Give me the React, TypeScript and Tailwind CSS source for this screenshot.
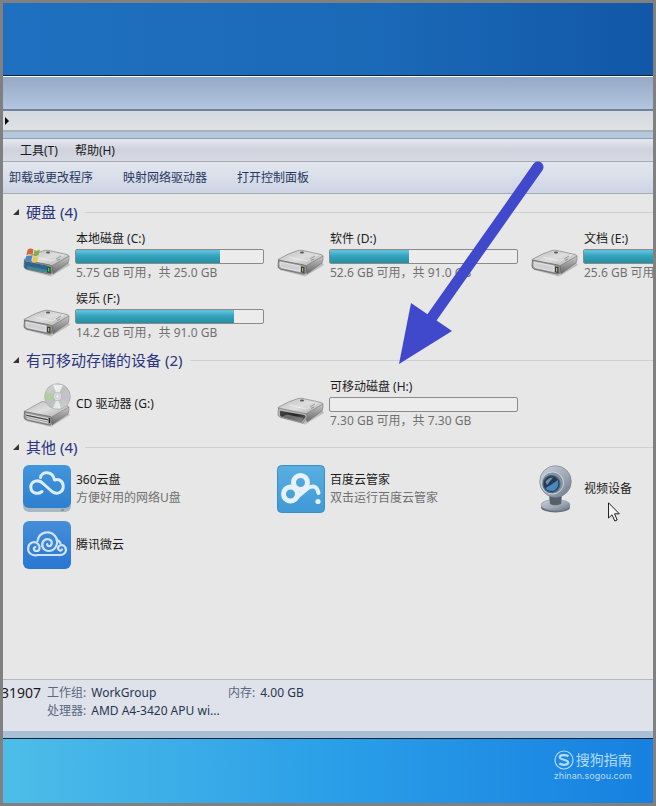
import React from "react";

interface Disk {
  name: string;
  icon: React.ReactNode;
  free?: string;
  total?: string;
}

interface App {
  name: string;
  icon: React.ReactNode;
  note?: string;
}

const DriveBody: React.FC<{ open?: boolean }> = ({ open }) => (
  <g>
    <path d="M3 38 L28 44.500 L47 33 L45 30 L4 35Z" fill="#000" opacity=".18" />
    <path d="M1 27.500 Q12 21 21 18.500 Q23 18 26 18.500 L44 22.500 Q47 23.500 45.500 25 L29 34.500 L2 29.500Z" fill="url(#driveTop)" stroke="#858585" strokeWidth=".7" />
    <path d="M28.500 34 L46 24 Q46.500 28 45 31 L30 42Z" fill="url(#driveSide)" stroke="#6c6c6c" strokeWidth=".5" />
    {open ? (
      <>
        <path d="M1.500 28 L28 33.500 Q31 34.500 30 37 L26 43 L3 37 Q1 36.500 1 34Z" fill="#b5b5b5" stroke="#6f6f6f" strokeWidth=".6" />
        <path d="M3 30.800 L27 35 Q29.500 35.800 28 38 L24.500 42 L4 36.500 Q3 36 3 34Z" fill="url(#slot)" />
        <path d="M5 36.500 L10 34.500 L26 38 L24.500 42Z" fill="#8c8c8c" opacity=".7" />
      </>
    ) : (
      <>
        <path d="M1.500 28 L27 33 Q29.500 33.500 29.500 36 L29 40 Q28.500 42.500 26 42 L3 37 Q1 36.500 1 34Z" fill="#9a9a9a" stroke="#5f5f5f" strokeWidth=".7" />
        <path d="M3 30 L23 34 L23 39.500 L4 35.500 Q3 35 3 33Z" fill="#cfcfd4" stroke="#efefef" strokeWidth=".8" />
        <path d="M24 34.500 L27.500 35 L27.500 41.200 L24 40.200Z" fill="#3d3d3d" />
        <path d="M25.700 36 V39.500" stroke="#b9dc7d" strokeWidth="1" />
      </>
    )}
    <path d="M12 25 L29 29 L41 22.500" fill="none" stroke="#fff" strokeWidth=".9" opacity=".5" />
    <path d="M33 27 L38 24 M34 28.500 L37 27" stroke="#777" strokeWidth=".7" />
    <ellipse cx="25" cy="20.500" rx="2" ry=".9" fill="#555" />
  </g>
);

const DriveIcon: React.FC = () => (
  <svg viewBox="0 0 48 48" className="size-12 shrink-0" aria-hidden="true">
    <DriveBody />
  </svg>
);

const SystemDriveIcon: React.FC = () => (
  <svg viewBox="0 0 48 48" className="size-12 shrink-0" aria-hidden="true">
    <DriveBody />
    <path d="M1.500 29 L24 33.500 L24 40.500 L3 36.500 Q1 36 1.500 33Z" fill="#33628c" />
    <path d="M4 34 L24 38 L24 40.500 L4 36.500Z" fill="#3a8a98" />
    <path d="M24 34.500 L27.500 35 L27.500 41.200 L24 40.200Z" fill="#155f35" />
    <path d="M25.700 36 V39.500" stroke="#6edb5a" strokeWidth="1" />
    <path d="M4.500 18 Q7 15.500 10.500 17.500 L9.500 23 Q6 21.500 3.300 23.500Z" fill="#d0683a" />
    <path d="M11.500 18 Q14 19.500 17 17.500 L15.500 23 Q13 25 10.500 23.500Z" fill="#86ac48" />
    <path d="M3 24.500 Q6 22.500 9.300 24.300 L8 29.500 Q5 28 1.800 29.500Z" fill="#4b85c4" />
    <path d="M10.300 24.600 Q13 26 15.500 24 L14 29.800 Q11.500 31.500 9 30Z" fill="#ecc94c" />
  </svg>
);

const RemovableDriveIcon: React.FC = () => (
  <svg viewBox="0 0 48 48" className="size-12 shrink-0" aria-hidden="true">
    <DriveBody open />
  </svg>
);

const CdDriveIcon: React.FC = () => (
  <svg viewBox="0 0 48 48" className="size-12 shrink-0" aria-hidden="true">
    <path d="M3 41 L28 47 L47 35 L45 33Z" fill="#000" opacity=".16" />
    <path d="M1 31.500 L19 21.500 L45 26 L45.500 27.500 L29 37.500 L2 33.500Z" fill="url(#driveTop)" stroke="#8b8b8b" strokeWidth=".7" />
    <path d="M28.500 37 L46 27 Q46.500 31 45 34 L29 45Z" fill="url(#driveSide)" stroke="#777" strokeWidth=".5" />
    <path d="M1.500 31.500 L27 36.500 Q29 37 29 39 L28.500 43 Q28.500 45.500 26 45 L3 40 Q1 39.500 1 37Z" fill="#9b9b9b" stroke="#555" strokeWidth=".6" />
    <path d="M3.500 34 L25 38.500 M3.500 36.500 L25 41 M4 38.500 L25 43" stroke="#eee" strokeWidth=".8" />
    <path d="M3.500 35.300 L25 39.800" stroke="#333" strokeWidth=".9" />
    <path d="M26.500 38 V43" stroke="#222" strokeWidth="1.300" />
    <circle cx="34.500" cy="16.500" r="12.800" fill="url(#disc)" stroke="#a2a2a2" strokeWidth=".7" />
    <path d="M34.500 16.500 L22.500 12 Q21 17 23.500 22Z" fill="#a9d28b" opacity=".7" />
    <path d="M34.500 16.500 L30 4.500 L40 5Z" fill="#fff" opacity=".7" />
    <path d="M34.500 16.500 L47 15 L45 23Z" fill="#c6b5d8" opacity=".5" />
    <path d="M34.500 16.500 L30 28.500 L38 28.500Z" fill="#fff" opacity=".6" />
    <circle cx="34.500" cy="16.500" r="4.200" fill="#d7dade" stroke="#b0b0b0" strokeWidth=".6" />
    <circle cx="34.500" cy="16.500" r="1.700" fill="#f3f3f3" stroke="#aaa" strokeWidth=".4" />
  </svg>
);

const Cloud360Icon: React.FC = () => (
  <svg viewBox="0 0 48 48" className="size-12 shrink-0" aria-hidden="true">
    <rect y="4" width="48" height="43" rx="6" fill="#a9b7c4" />
    <rect width="48" height="43" rx="6" fill="url(#blueTile)" />
    <path d="M19 26.500 C15.500 29.500 8 29 7.800 22.300 C7.800 15.500 16 14 20 18.500 L29 26.500 C34 30.500 40.500 27 40.200 21 C40 15.500 35 13.500 31.500 15 C30 6 18.500 5.500 17.500 12.500" fill="none" stroke="#dcedfc" strokeWidth="3" strokeLinecap="round" strokeLinejoin="round" />
    <path d="M38 45 h3" stroke="#6a7580" />
  </svg>
);

const BaiduIcon: React.FC = () => (
  <svg viewBox="0 0 48 48" className="size-12 shrink-0" aria-hidden="true">
    <rect x=".5" y=".5" width="47" height="47" rx="4" fill="url(#baiduTile)" stroke="#3c8fc6" />
    <g fill="none" stroke="#e6f1fb" strokeLinecap="round">
      <circle cx="23.500" cy="17.500" r="7" strokeWidth="5" />
      <circle cx="13.500" cy="29" r="7" strokeWidth="5" />
      <path d="M19 33 L31 23 Q39.500 18.500 41.500 28" strokeWidth="4" />
    </g>
    <circle cx="41" cy="36.500" r="2.600" fill="#e6f1fb" />
  </svg>
);

const WeiyunIcon: React.FC = () => (
  <svg viewBox="0 0 48 48" className="size-12 shrink-0" aria-hidden="true">
    <rect width="48" height="48" rx="6" fill="url(#weiyunTile)" />
    <g fill="none" stroke="#cfe4f8" strokeWidth="2.200" strokeLinecap="round">
      <path d="M15 34 H36 C42 34.500 44.500 29.500 42 26 C40 23 35.500 24 35 27 C34.800 29.500 38 30.500 39 28.500" />
      <path d="M15 34 C8 35.500 4.500 31 5.200 26.500 C6 21.500 11.500 19.500 15 23 C18 26 16.500 30 13.500 30 C10.500 30 10 26.500 12.500 26" />
      <path d="M14.500 20 C16 10.500 27 9 32 15 C36.500 20.500 33.500 29.500 26 30 C20 30 17.500 24 20.500 20 C24 16 30 19 28.500 23.500 C27.500 26 24 25.500 24.200 23" />
      <path d="M33.500 19 Q36.500 19.500 37.500 22.500" />
    </g>
  </svg>
);

const WebcamIcon: React.FC = () => (
  <svg viewBox="0 0 48 48" className="size-12 shrink-0" aria-hidden="true">
    <ellipse cx="24.500" cy="42.500" rx="14.500" ry="5" fill="#68717d" />
    <ellipse cx="24.500" cy="40" rx="14.500" ry="5.500" fill="url(#camBody)" stroke="#8a949f" strokeWidth=".6" />
    <path d="M18 30 H31 L30 39 Q24 41.500 19 39Z" fill="#56606d" />
    <circle cx="24.500" cy="16.500" r="15.800" fill="url(#camBody)" stroke="#7c8692" strokeWidth=".7" />
    <circle cx="21.500" cy="18" r="11" fill="#8591a2" stroke="#dde3ea" strokeWidth=".8" />
    <circle cx="20.500" cy="19" r="8.500" fill="#263a52" stroke="#51647a" strokeWidth="1.200" />
    <path d="M14.500 23 Q20 20 27 15 Q29 24 21.500 26 Q17 26.500 14.500 23Z" fill="#4688c0" />
    <path d="M14.500 17 Q17 12.500 22 12.500 L16 20Z" fill="#6f92b2" />
  </svg>
);

const Gradients: React.FC = () => (
  <svg className="absolute size-0" aria-hidden="true">
    <defs>
      <linearGradient id="driveTop" x1="0" y1="0" x2="1" y2="1">
        <stop offset="0" stopColor="#bdbdbd" />
        <stop offset=".5" stopColor="#dedede" />
        <stop offset="1" stopColor="#a8a8a8" />
      </linearGradient>
      <linearGradient id="driveSide" x1="0" y1="0" x2="0" y2="1">
        <stop offset="0" stopColor="#c8c8c8" />
        <stop offset="1" stopColor="#666" />
      </linearGradient>
      <linearGradient id="slot" x1="0" y1="0" x2="1" y2="1">
        <stop offset="0" stopColor="#4a4a4a" />
        <stop offset=".5" stopColor="#262626" />
        <stop offset="1" stopColor="#777" />
      </linearGradient>
      <linearGradient id="disc" x1="0" y1="0" x2="1" y2="1">
        <stop offset="0" stopColor="#d4d4d4" />
        <stop offset=".5" stopColor="#bcc0be" />
        <stop offset="1" stopColor="#d6d6d6" />
      </linearGradient>
      <linearGradient id="blueTile" x1="0" y1="0" x2="0" y2="1">
        <stop offset="0" stopColor="#4296dc" />
        <stop offset="1" stopColor="#2f7fd0" />
      </linearGradient>
      <linearGradient id="baiduTile" x1="0" y1="0" x2="0" y2="1">
        <stop offset="0" stopColor="#5aafe0" />
        <stop offset="1" stopColor="#3f99d6" />
      </linearGradient>
      <linearGradient id="weiyunTile" x1="0" y1="0" x2="0" y2="1">
        <stop offset="0" stopColor="#458ed8" />
        <stop offset="1" stopColor="#2a76d2" />
      </linearGradient>
      <linearGradient id="camBody" x1="0" y1="0" x2="1" y2="1">
        <stop offset="0" stopColor="#ccd3dc" />
        <stop offset=".6" stopColor="#9ba5b3" />
        <stop offset="1" stopColor="#667080" />
      </linearGradient>
    </defs>
  </svg>
);

const hardDisks: Disk[] = [
  { name: "本地磁盘 (C:)", icon: <SystemDriveIcon />, free: "5.75", total: "25.0" },
  { name: "软件 (D:)", icon: <DriveIcon />, free: "52.6", total: "91.0" },
  { name: "文档 (E:)", icon: <DriveIcon />, free: "25.6", total: "91.0" },
  { name: "娱乐 (F:)", icon: <DriveIcon />, free: "14.2", total: "91.0" },
];

const removable: Disk[] = [
  { name: "CD 驱动器 (G:)", icon: <CdDriveIcon /> },
  { name: "可移动磁盘 (H:)", icon: <RemovableDriveIcon />, free: "7.30", total: "7.30" },
];

const others: App[] = [
  { name: "360云盘", icon: <Cloud360Icon />, note: "方便好用的网络U盘" },
  { name: "百度云管家", icon: <BaiduIcon />, note: "双击运行百度云管家" },
  { name: "视频设备", icon: <WebcamIcon /> },
  { name: "腾讯微云", icon: <WeiyunIcon /> },
];

const DiskTile: React.FC<{ disk: Disk }> = ({ disk }) => {
  const used = disk.total
    ? (1 - Number(disk.free) / Number(disk.total)) * 100
    : 0;
  return (
    <li className="flex h-[60px] items-center gap-1">
      {disk.icon}
      <div className="w-[189px]">
        <p className="pl-px leading-4">{disk.name}</p>
        {disk.total && (
          <>
            <div
              role="meter"
              aria-label={disk.name}
              aria-valuenow={Math.round(used)}
              aria-valuemin={0}
              aria-valuemax={100}
              className="mt-0.5 mb-px h-[15px] overflow-hidden rounded-xs border border-[#8a8a8a] bg-[#ececec]"
            >
              <div
                className="h-full bg-linear-to-b from-[#5cc0da] from-10% via-[#35a3bf] via-45% to-[#23909f]"
                style={{ width: `${used}%` }}
              />
            </div>
            <p className="pl-px leading-4 whitespace-nowrap text-[#707070]">
              {disk.free} GB 可用，共 {disk.total} GB
            </p>
          </>
        )}
      </div>
    </li>
  );
};

const AppTile: React.FC<{ app: App }> = ({ app }) => (
  <li className="flex h-14 items-center gap-[5px]">
    {app.icon}
    <div className="leading-[18px]">
      <p>{app.name}</p>
      {app.note && <p className="text-[#707070]">{app.note}</p>}
    </div>
  </li>
);

const Group: React.FC<{ title: string; children: React.ReactNode }> = ({
  title,
  children,
}) => (
  <section>
    <h2 className="flex h-6 items-center gap-2 pl-[10px]">
      <button
        type="button"
        aria-expanded="true"
        className="flex items-center gap-[7px] text-[15px] leading-6 text-[#2b3480]"
      >
        <svg viewBox="0 0 6 6" className="size-1.5" aria-hidden="true">
          <path d="M6 0 V6 H0Z" fill="#333" />
        </svg>
        {title}
      </button>
      <span className="h-px flex-1 bg-[#cfd0d2]" />
    </h2>
    {children}
  </section>
);

const gridClass = "grid grid-cols-[repeat(3,254px)] pl-5";

const Explorer: React.FC = () => (
  <main className="relative border-y border-[#14213f] bg-[#e7e7e7] text-xs text-[#1b1b1b]">
    <div className="h-[33px] border-t border-white bg-linear-to-b from-[#95aac6] to-[#b3c5df]" />
    <div className="flex h-[23px] items-center border-t-2 border-b-2 border-t-[#71829b] border-b-[#a9b0ba] bg-linear-to-b from-[#d5dae1] to-[#dfe1e3] pl-0.5">
      <svg viewBox="0 0 4 8" className="h-2 w-1" aria-hidden="true">
        <path d="M0 0 L4 4 L0 8Z" fill="#000" />
      </svg>
    </div>
    <div className="h-[7px] border-b border-[#8f9db1] bg-[#b5c6df]" />
    <nav
      aria-label="菜单"
      className="flex h-[23px] items-center gap-[17px] border-b border-[#a6a9b4] bg-linear-to-b from-[#e5e8ef] via-[#cfd1dd] via-50% to-[#d8dae3] pt-0.5 pl-[17px]"
    >
      <button type="button">工具(T)</button>
      <button type="button">帮助(H)</button>
    </nav>
    <div
      role="toolbar"
      aria-label="命令"
      className="flex h-8 items-center gap-[30px] border-b border-[#a3aab8] bg-linear-to-b from-[#e2e6ee] via-[#d9deea] via-50% to-[#cdd4e4] pl-1.5 text-[#26385e]"
    >
      <button type="button">卸载或更改程序</button>
      <button type="button">映射网络驱动器</button>
      <button type="button">打开控制面板</button>
    </div>

    <div className="overflow-hidden pt-1.5 pb-[106px]">
      <Group title="硬盘 (4)">
        <ul className={`${gridClass} py-0.5`}>
          {hardDisks.map((disk) => (
            <DiskTile key={disk.name} disk={disk} />
          ))}
        </ul>
      </Group>
      <Group title="有可移动存储的设备 (2)">
        <ul className={`${gridClass} pt-0.5 pb-px`}>
          {removable.map((disk) => (
            <DiskTile key={disk.name} disk={disk} />
          ))}
        </ul>
      </Group>
      <Group title="其他 (4)">
        <ul className={`${gridClass} pt-0.5`}>
          {others.map((app) => (
            <AppTile key={app.name} app={app} />
          ))}
        </ul>
      </Group>
    </div>

    <footer className="flex h-[52px] border-t border-[#b4b8bf] bg-[#dfe2ea] pt-1 leading-[18px] text-[#27364f]">
      <div className="flex w-[38px] shrink-0 justify-end overflow-hidden text-sm leading-[18px] text-[#1b1b1b]">
        31907
      </div>
      <dl className="ml-1.5 w-[181px]">
        <div className="flex gap-[5px]">
          <dt className="text-[#5a6780]">工作组:</dt>
          <dd>WorkGroup</dd>
        </div>
        <div className="flex gap-[5px]">
          <dt className="text-[#5a6780]">处理器:</dt>
          <dd className="whitespace-nowrap">AMD A4-3420 APU wi...</dd>
        </div>
      </dl>
      <dl className="flex gap-[5px]">
        <dt className="text-[#5a6780]">内存:</dt>
        <dd>4.00 GB</dd>
      </dl>
    </footer>
    <div className="h-[7px] bg-[#a9bfd3]" />

    {/* arrow pointing at the removable disk */}
    <svg
      viewBox="0 0 146 206"
      className="pointer-events-none absolute top-[83px] left-[395px] h-[206px] w-[146px]"
      aria-hidden="true"
    >
      <path d="M140 8 L30 164" stroke="#4048cc" strokeWidth="11" strokeLinecap="round" />
      <path d="M1 205 L13 144 L54 172Z" fill="#4048cc" />
    </svg>

    {/* mouse pointer */}
    <svg
      viewBox="0 0 12 20"
      className="pointer-events-none absolute top-[426px] left-[605px] h-5 w-3"
      aria-hidden="true"
    >
      <path d="M.5 .8 V16 L4 12.800 L6.800 19 L9.200 18 L6.500 11.800 H11.300Z" fill="#f5f5f5" stroke="#222" strokeWidth="1" />
    </svg>
  </main>
);

const App: React.FC = () => (
  <div className="min-h-screen border-[3px] border-[#808080] bg-[#1a87e0] font-['Noto_Sans','Noto_Sans_CJK_SC',sans-serif]">
    <Gradients />
    <div className="h-[72px] bg-linear-to-r from-[#1f70c0] via-[#1b6ab8] via-55% to-[#1257a8]" />
    <Explorer />
    <div className="flex h-16 justify-end bg-linear-to-r from-[#4dbde8] via-[#2b9fe8] via-50% to-[#1780e0] pt-[11px] pr-[21px] text-[#b5dcfb]">
      <div className="text-right">
        <div className="flex items-center gap-0.5 text-sm leading-5">
          <svg viewBox="0 0 20 20" className="size-5" aria-hidden="true">
            <circle cx="10" cy="10" r="9" fill="none" stroke="currentColor" strokeWidth="1.200" />
            <path d="M14.500 6.300 C11 4.300 5.500 4.800 5.800 7.500 C6 10 14 9.600 14.200 12.300 C14.300 15.200 8.500 15.500 5.300 13.500" fill="none" stroke="currentColor" strokeWidth="2.200" />
          </svg>
          搜狗指南
        </div>
        <p className="font-['Inter',sans-serif] text-[9px] leading-3">zhinan.sogou.com</p>
      </div>
    </div>
  </div>
);

export default App;
